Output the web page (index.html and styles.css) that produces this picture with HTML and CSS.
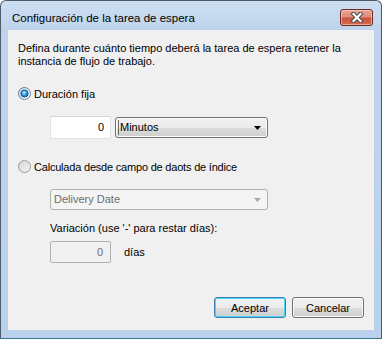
FILE: index.html
```
<!DOCTYPE html>
<html lang="es">
<head>
<meta charset="utf-8">
<title>Configuración de la tarea de espera</title>
<link rel="stylesheet" href="styles.css">
</head>
<body>
<div class="window">
  <div class="titlebar">
    <span class="title">Configuración de la tarea de espera</span>
    <div class="close">
      <svg width="14" height="11" viewBox="0 0 14 11">
        <path d="M3.5 2 L10.5 9 M10.5 2 L3.5 9" stroke="#4a4a4a" stroke-width="4.2" stroke-linecap="square" fill="none"/>
        <path d="M3.5 2 L10.5 9 M10.5 2 L3.5 9" stroke="#ffffff" stroke-width="2.2" stroke-linecap="square" fill="none"/>
      </svg>
    </div>
  </div>
  <div class="client">
    <p class="intro">Defina durante cuánto tiempo deberá la tarea de espera retener la instancia de flujo de trabajo.</p>

    <div class="radio-row first">
      <svg class="radio" width="13" height="13" viewBox="0 0 13 13">
        <defs>
          <linearGradient id="rbg" x1="0" y1="0" x2="1" y2="1">
            <stop offset="0" stop-color="#c9d9ea"/>
            <stop offset="1" stop-color="#ffffff"/>
          </linearGradient>
          <radialGradient id="dot" cx="45%" cy="40%" r="65%">
            <stop offset="0" stop-color="#c8f4ff"/>
            <stop offset="0.45" stop-color="#38a6ec"/>
            <stop offset="1" stop-color="#164d8e"/>
          </radialGradient>
        </defs>
        <circle cx="6.5" cy="6.5" r="6" fill="url(#rbg)" stroke="#5e7e9e"/>
        <circle cx="6.5" cy="6.5" r="3.6" fill="url(#dot)" stroke="#1d4f86" stroke-width="0.9"/>
      </svg>
      <span>Duración fija</span>
    </div>

    <div class="field-row indent">
      <div class="textbox">0</div>
      <div class="combo">
        <span class="combo-text focus">Minutos</span>
        <svg width="8" height="4" viewBox="0 0 8 4"><path d="M0 0 H7 L3.5 4 Z" fill="#000"/></svg>
      </div>
    </div>

    <div class="radio-row second">
      <svg class="radio" width="13" height="13" viewBox="0 0 13 13">
        <defs>
          <linearGradient id="rbg2" x1="0" y1="0" x2="1" y2="1">
            <stop offset="0" stop-color="#cfcfcf"/>
            <stop offset="1" stop-color="#fbfbfb"/>
          </linearGradient>
        </defs>
        <circle cx="6.5" cy="6.5" r="6" fill="url(#rbg2)" stroke="#9a9a9a"/>
        <circle cx="6.5" cy="6.5" r="4" fill="none" stroke="#e2e2e2" stroke-width="1"/>
      </svg>
      <span class="tight">Calculada desde campo de daots de índice</span>
    </div>

    <div class="combo disabled wide indent">
      <span class="combo-text">Delivery Date</span>
      <svg width="8" height="4" viewBox="0 0 8 4"><path d="M0 0 H7 L3.5 4 Z" fill="#a7a7a7"/></svg>
    </div>

    <div class="label indent">Variación (use '-' para restar días):</div>

    <div class="field-row indent days-row">
      <div class="textbox disabled">0</div>
      <span class="unit">días</span>
    </div>

    <div class="buttons">
      <div class="btn default">Aceptar</div>
      <div class="btn">Cancelar</div>
    </div>
  </div>
</div>
</body>
</html>
```
FILE: styles.css
```
html, body {
  margin: 0;
  background: #ffffff;
}

body {
  font-family: "Liberation Sans", Arial, sans-serif;
  font-size: 11px;
  color: #000;
}

.window {
  width: 382px;
  height: 339px;
  box-sizing: border-box;
  border: 1px solid #4f5c6c;
  border-bottom-color: #3a7596;
  border-radius: 6px 6px 0 0;
  background: linear-gradient(#cddef2 0px, #bfd4ec 29px, #b9d1ea 100%);
  padding: 0 7px 8px 7px;
  display: flex;
  flex-direction: column;
}

.titlebar {
  height: 29px;
  flex: none;
  display: flex;
  align-items: flex-start;
  justify-content: space-between;
}

.title {
  font-size: 11.5px;
  line-height: 15px;
  padding: 10px 0 0 4px;
  color: #000;
}

.close {
  margin: 8px 1px 0 0;
  width: 33px;
  height: 17px;
  box-sizing: border-box;
  border: 1px solid #6b2a22;
  border-radius: 3px;
  background: linear-gradient(#e7a393 0%, #dc8c7b 48%, #c9523c 52%, #d86a4e 100%);
  box-shadow: inset 0 0 0 1px rgba(255, 220, 210, 0.55);
  display: flex;
  align-items: center;
  justify-content: center;
}

.client {
  flex: 1;
  background: #f0f0f0;
  display: flex;
  flex-direction: column;
  padding: 12px 10px 12px 10px;
}

.intro {
  margin: 0;
  line-height: 13px;
  width: 340px;
}

.radio-row {
  display: flex;
  align-items: center;
  gap: 3px;
  height: 15px;
}

.radio-row.first {
  margin-top: 18px;
}

.radio-row.second {
  margin-top: 20px;
}

.tight {
  letter-spacing: -0.2px;
}

.radio {
  flex: none;
}

.indent {
  margin-left: 32px;
}

.field-row {
  display: flex;
  align-items: center;
  gap: 4px;
  margin-top: 15px;
}

.textbox {
  width: 61px;
  height: 23px;
  box-sizing: border-box;
  background: #fff;
  border: 1px solid #e3e3e3;
  border-top-color: #d5d5d5;
  text-align: right;
  padding-right: 6px;
  line-height: 21px;
}

.textbox.disabled {
  height: 22px;
  line-height: 20px;
  background: #f0f0f0;
  border-color: #adb2b5;
  border-radius: 2px;
  color: #6d6d6d;
  padding-right: 7px;
}

.combo {
  width: 153px;
  height: 21px;
  box-sizing: border-box;
  border: 1px solid #707070;
  border-radius: 3px;
  background: linear-gradient(#f2f2f2 0%, #ebebeb 50%, #dddddd 50%, #cfcfcf 100%);
  box-shadow: inset 0 0 0 1px #fcfcfc;
  display: flex;
  align-items: center;
  justify-content: space-between;
  padding: 0 5px 0 2px;
}

.combo-text {
  line-height: 15px;
  padding: 0 1px 0 1px;
}

.combo-text.focus {
  border-left: 1px solid #6e6e6e;
}

.combo.disabled {
  background: #f4f4f4;
  border-color: #adb2b5;
  box-shadow: none;
  color: #6d6d6d;
  margin-top: 15px;
}

.combo.wide {
  width: 218px;
}

.label {
  margin-top: 12px;
  line-height: 13px;
}

.days-row {
  margin-top: 6px;
  gap: 13px;
}

.buttons {
  margin-top: auto;
  display: flex;
  justify-content: flex-end;
  gap: 6px;
}

.btn {
  width: 72px;
  height: 21px;
  box-sizing: border-box;
  border: 1px solid #707070;
  border-radius: 3px;
  background: linear-gradient(#f2f2f2 0%, #ebebeb 50%, #dddddd 50%, #cfcfcf 100%);
  box-shadow: inset 0 0 0 1px #fcfcfc;
  display: flex;
  align-items: center;
  justify-content: center;
}

.btn.default {
  border-color: #3c7fb1;
  box-shadow: inset 0 0 0 1px #48d3f8;
}
```
